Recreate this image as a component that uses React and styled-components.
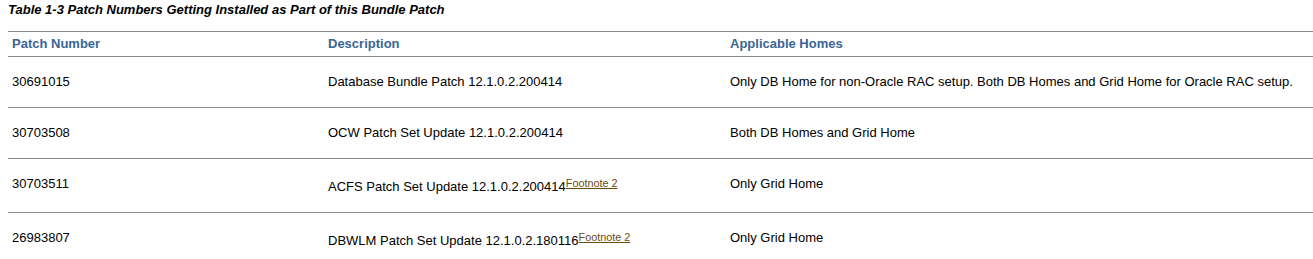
import React from "react";
import styled, { createGlobalStyle } from "styled-components";

const Global = createGlobalStyle`
  html, body { margin: 0; padding: 0; background: #ffffff; }
  body {
    padding-left: 8px;
    font-family: "Liberation Sans", Arial, sans-serif;
    font-size: 13px;
    color: #000000;
  }
`;

const Caption = styled.p`
  margin: 2px 0 14px 0;
  font-weight: bold;
  font-style: italic;
  font-size: 13px;
  line-height: 15px;
  color: #000;
`;

const Table = styled.table`
  width: 100%;
  border-collapse: collapse;
  border-top: 1px solid #8a8a8a;
`;

const HeadCell = styled.th`
  text-align: left;
  font-weight: bold;
  color: #3a6596;
  padding: 4px 4px 5px 4px;
  line-height: 15px;
  border-bottom: 1px solid #8a8a8a;
  vertical-align: top;
  width: ${(p) => p.$w || "auto"};
`;

const Row = styled.tr`
  border-bottom: ${(p) => (p.$last ? "none" : "1px solid #8a8a8a")};
`;

const Cell = styled.td`
  padding: 17px 4px 18px 4px;
  line-height: 15px;
  vertical-align: top;
`;

const FootLink = styled.sup`
  font-size: smaller;
  color: #6b4c12;
  text-decoration: underline;
  line-height: 15px;
  vertical-align: 4px;
`;

const rows = [
  {
    num: "30691015",
    desc: "Database Bundle Patch 12.1.0.2.200414",
    homes:
      "Only DB Home for non-Oracle RAC setup. Both DB Homes and Grid Home for Oracle RAC setup.",
  },
  {
    num: "30703508",
    desc: "OCW Patch Set Update 12.1.0.2.200414",
    homes: "Both DB Homes and Grid Home",
  },
  {
    num: "30703511",
    desc: "ACFS Patch Set Update 12.1.0.2.200414",
    foot: true,
    homes: "Only Grid Home",
  },
  {
    num: "26983807",
    desc: "DBWLM Patch Set Update 12.1.0.2.180116",
    foot: true,
    homes: "Only Grid Home",
  },
];

export default function App() {
  return (
    <>
      <Global />
      <Caption>
        Table 1-3 Patch Numbers Getting Installed as Part of this Bundle Patch
      </Caption>
      <Table>
        <thead>
          <tr>
            <HeadCell $w="308px">Patch Number</HeadCell>
            <HeadCell $w="394px">Description</HeadCell>
            <HeadCell>Applicable Homes</HeadCell>
          </tr>
        </thead>
        <tbody>
          {rows.map((r, i) => (
            <Row key={r.num} $last={i === rows.length - 1}>
              <Cell>{r.num}</Cell>
              <Cell>
                {r.desc}
                {r.foot && <FootLink>Footnote 2</FootLink>}
              </Cell>
              <Cell>{r.homes}</Cell>
            </Row>
          ))}
        </tbody>
      </Table>
    </>
  );
}
